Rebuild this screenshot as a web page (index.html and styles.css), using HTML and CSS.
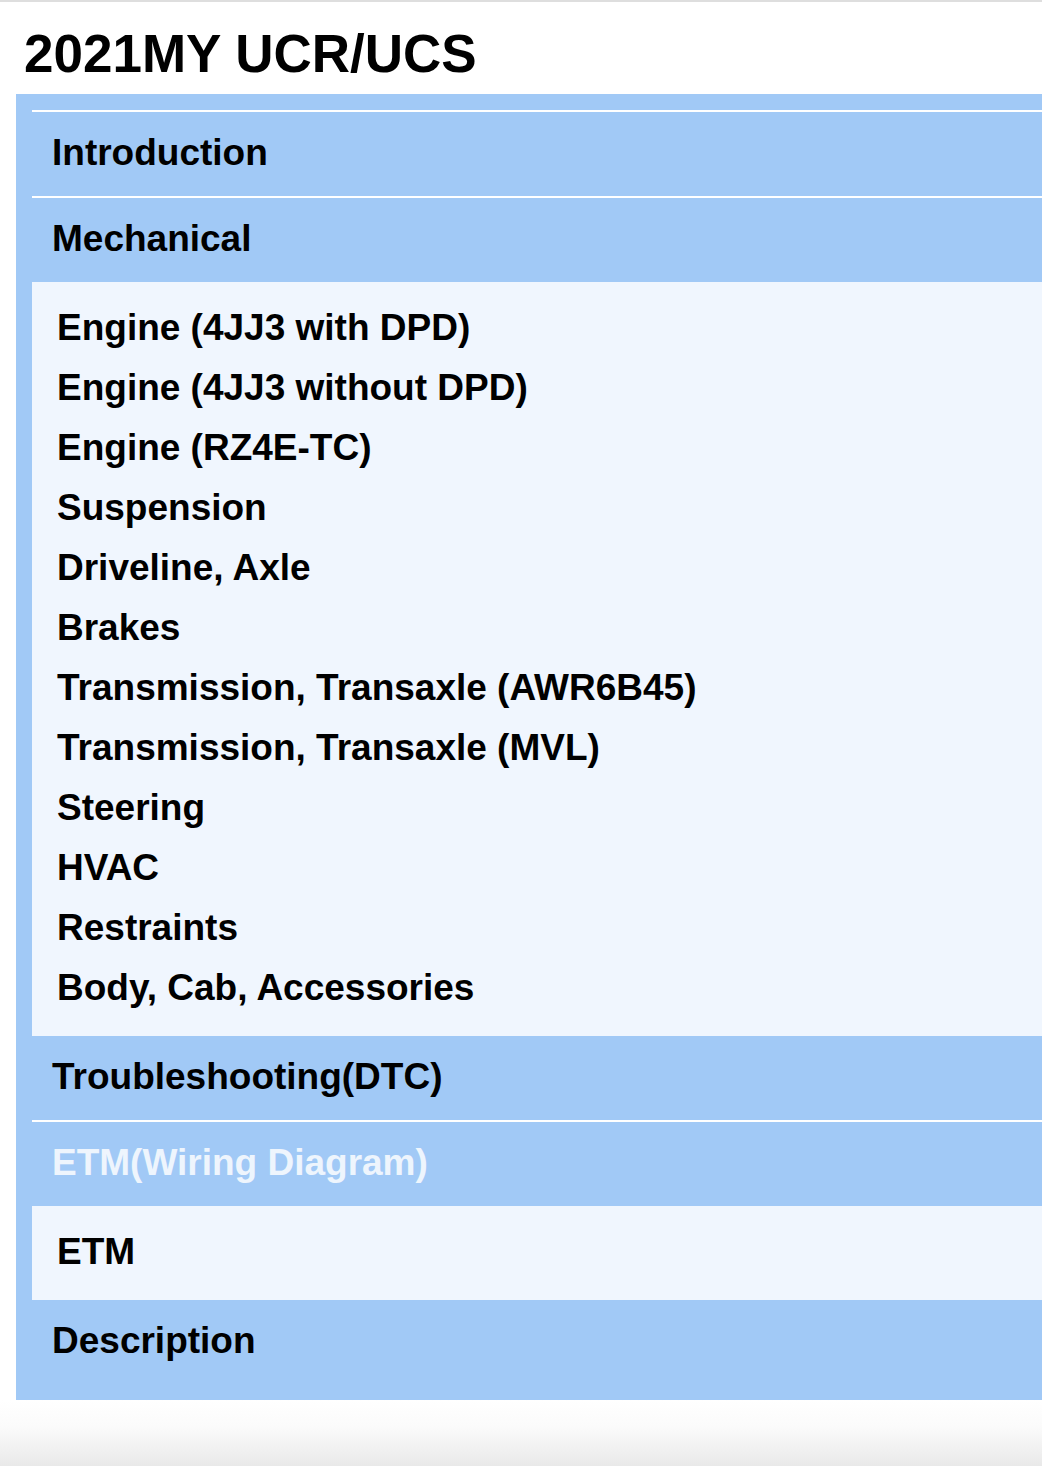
FILE: index.html
```html
<!DOCTYPE html>
<html lang="en">

<head>
	<meta charset="UTF-8">
	<title>2021MY UCR/UCS</title>
	<link rel="stylesheet" href="styles.css">
</head>

<body>
	<div class="page">
		<h1 class="title">2021MY UCR/UCS</h1>
		<div class="menu">
			<div class="menu_head">Introduction</div>
			<div class="menu_head">Mechanical</div>
			<ul class="sub">
				<li>Engine (4JJ3 with DPD)</li>
				<li>Engine (4JJ3 without DPD)</li>
				<li>Engine (RZ4E-TC)</li>
				<li>Suspension</li>
				<li>Driveline, Axle</li>
				<li>Brakes</li>
				<li>Transmission, Transaxle (AWR6B45)</li>
				<li>Transmission, Transaxle (MVL)</li>
				<li>Steering</li>
				<li>HVAC</li>
				<li>Restraints</li>
				<li>Body, Cab, Accessories</li>
			</ul>
			<div class="menu_head">Troubleshooting(DTC)</div>
			<div class="menu_head active">ETM(Wiring Diagram)</div>
			<ul class="sub">
				<li>ETM</li>
			</ul>
			<div class="menu_head">Description</div>
		</div>
	</div>
	<div class="bottom"></div>
</body>

</html>
```

FILE: styles.css
```css
* {
	margin: 0;
	padding: 0;
}

body {
	background: #fff;
	font-family: "Liberation Sans", Arial, Helvetica, sans-serif;
	font-weight: bold;
	color: #000;
	overflow: hidden;
}

.page {
	border-top: 2px solid #dedede;
}

.title {
	font-size: 53px;
	line-height: 60px;
	padding: 22px 24px 10px;
}

.menu {
	margin-left: 16px;
	padding: 16px 0 16px 16px;
	background: #a1c9f6;
}

.menu_head {
	font-size: 37px;
	line-height: 82px;
	padding: 0 20px 2px;
	border-top: 2px solid #fff;
}

.sub+.menu_head {
	border-top: none;
}

.menu_head.active {
	color: #eef5fd;
}

.sub {
	list-style-type: none;
	background: #f0f6fe;
	padding: 16px 25px 18px;
}

.sub li {
	font-size: 37px;
	line-height: 60px;
}

.bottom {
	height: 66px;
	background: linear-gradient(to bottom, #fff 0%, #fbfbfb 40%, #e9e9e9 100%);
}
```
